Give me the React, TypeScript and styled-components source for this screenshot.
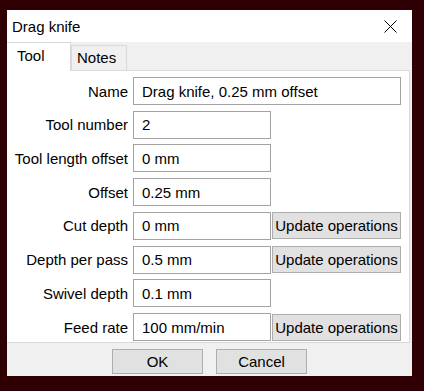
import { Fragment } from "react";
import styled, { createGlobalStyle } from "styled-components";

const GlobalStyle = createGlobalStyle`
  html, body {
    margin: 0;
    padding: 0;
    background: #2f0003;
  }
  body {
    font-family: "Segoe UI", "Liberation Sans", Arial, sans-serif;
    font-size: 15px;
    color: #000;
  }
`;

const Page = styled.div`
  padding: 10px 12px 15px 7px;
`;

const Window = styled.div`
  width: 405px;
  height: 366px;
  background: #f0f0f0;
  display: flex;
  flex-direction: column;
`;

const TitleBar = styled.div`
  height: 32px;
  background: #fff;
  display: flex;
  align-items: center;
  justify-content: space-between;
  padding: 0 15px 0 5px;
`;

const Title = styled.span`
  font-size: 15px;
  line-height: 1;
`;

const TabBar = styled.div`
  height: 28px;
  display: flex;
  align-items: flex-end;
`;

const Tab = styled.div<{ $active?: boolean }>`
  box-sizing: border-box;
  height: ${(p) => (p.$active ? "29px" : "25px")};
  width: ${(p) => (p.$active ? "64px" : "56px")};
  margin-bottom: ${(p) => (p.$active ? "-1px" : "0")};
  position: relative;
  z-index: ${(p) => (p.$active ? 1 : 0)};
  background: ${(p) => (p.$active ? "#fff" : "#f0f0f0")};
  border: 1px solid #d9d9d9;
  border-bottom: none;
  border-left: ${(p) => (p.$active ? "none" : "1px solid #d9d9d9")};
  padding: ${(p) => (p.$active ? "4px 0 0 10px" : "3px 0 0 5px")};
  line-height: 18px;
`;

const Pane = styled.div`
  box-sizing: border-box;
  height: 273px;
  margin-right: 2px;
  background: #fff;
  border: 1px solid #d9d9d9;
  border-left: none;
  padding-top: 6px;
`;

const Form = styled.div`
  display: grid;
  grid-template-columns: 126px 138px 130px;
  grid-auto-rows: 28px;
  row-gap: 5.72px;
`;

const Label = styled.label`
  display: flex;
  align-items: center;
  justify-content: flex-end;
  padding-right: 5px;
  white-space: nowrap;
`;

const Field = styled.div<{ $wide?: boolean }>`
  box-sizing: border-box;
  grid-column: ${(p) => (p.$wide ? "2 / 4" : "2")};
  border: 1px solid #a2a2a2;
  background: #fff;
  display: flex;
  align-items: center;
  padding-left: 8px;
  white-space: nowrap;
`;

const UpdateButton = styled.button`
  box-sizing: border-box;
  grid-column: 3;
  height: 27px;
  align-self: center;
  margin: 0 0 0 1px;
  background: #e1e1e1;
  border: 1px solid #adadad;
  font: inherit;
  color: #000;
  padding: 0;
`;

const ButtonRow = styled.div`
  display: flex;
  justify-content: center;
  gap: 13px;
  padding-top: 6px;
`;

const DialogButton = styled.button`
  box-sizing: border-box;
  width: 91px;
  height: 25px;
  background: #e1e1e1;
  border: 1px solid #adadad;
  font: inherit;
  color: #000;
  padding: 0;
`;

type Row = { label: string; value: string; wide?: boolean; update?: boolean };

const rows: Row[] = [
  { label: "Name", value: "Drag knife, 0.25 mm offset", wide: true },
  { label: "Tool number", value: "2" },
  { label: "Tool length offset", value: "0 mm" },
  { label: "Offset", value: "0.25 mm" },
  { label: "Cut depth", value: "0 mm", update: true },
  { label: "Depth per pass", value: "0.5 mm", update: true },
  { label: "Swivel depth", value: "0.1 mm" },
  { label: "Feed rate", value: "100 mm/min", update: true },
];

function CloseIcon() {
  return (
    <svg width="13" height="13" viewBox="0 0 13 13">
      <path d="M0.5 0.5 L12.5 12.5 M12.5 0.5 L0.5 12.5" stroke="#000" strokeWidth="1" />
    </svg>
  );
}

export default function App() {
  return (
    <Page>
      <GlobalStyle />
      <Window>
        <TitleBar>
          <Title>Drag knife</Title>
          <CloseIcon />
        </TitleBar>
        <TabBar>
          <Tab $active>Tool</Tab>
          <Tab>Notes</Tab>
        </TabBar>
        <Pane>
          <Form>
            {rows.map((r) => (
              <Fragment key={r.label}>
                <Label>{r.label}</Label>
                <Field $wide={r.wide}>{r.value}</Field>
                {r.update && <UpdateButton>Update operations</UpdateButton>}
                {!r.wide && !r.update && <span />}
              </Fragment>
            ))}
          </Form>
        </Pane>
        <ButtonRow>
          <DialogButton>OK</DialogButton>
          <DialogButton>Cancel</DialogButton>
        </ButtonRow>
      </Window>
    </Page>
  );
}
